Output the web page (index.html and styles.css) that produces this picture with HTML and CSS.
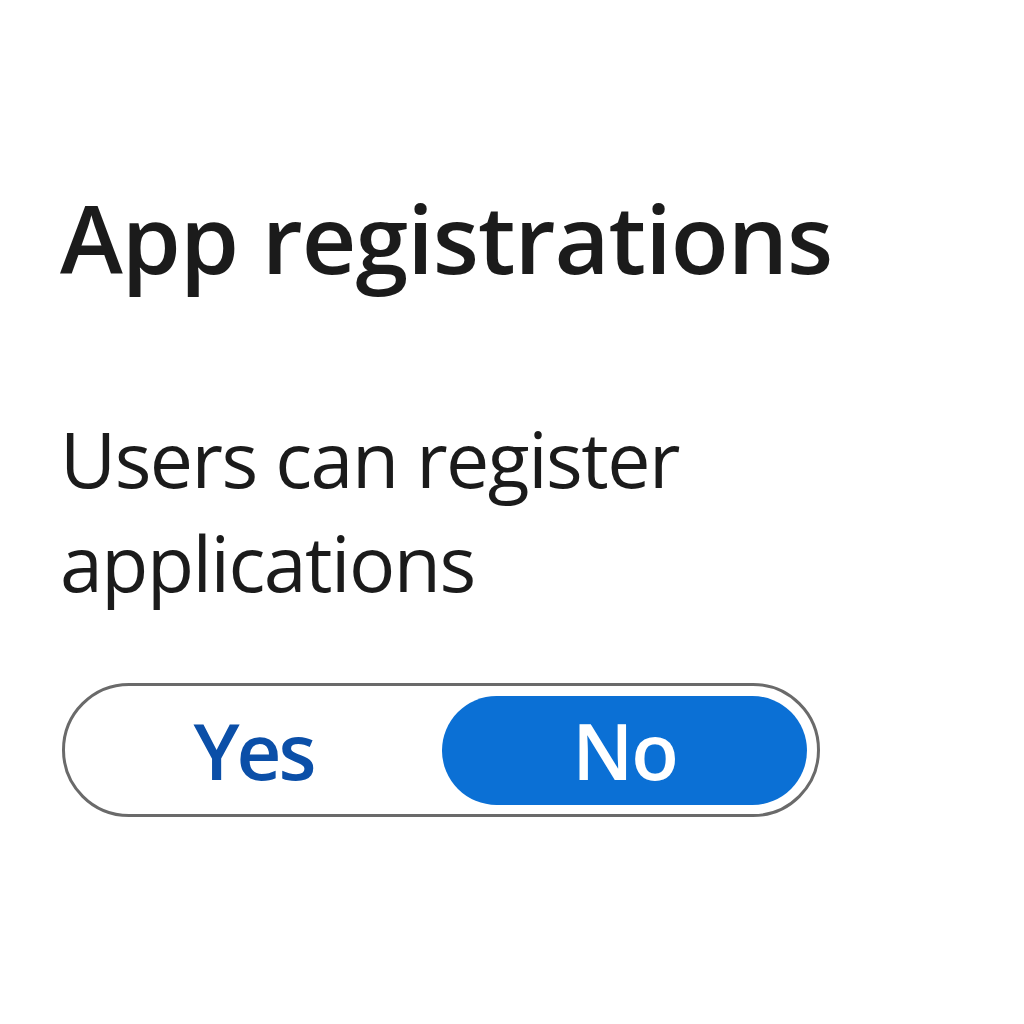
FILE: index.html
```html
<!DOCTYPE html>
<html>
<head>
<meta charset="utf-8">
<link rel="stylesheet" href="styles.css">
</head>
<body>
<main class="page">
  <h1 class="title">App registrations</h1>
  <p class="label">Users can register applications</p>
  <div class="toggle">
    <span class="opt yes">Yes</span>
    <span class="opt no">No</span>
  </div>
</main>
</body>
</html>
```
FILE: styles.css
```css
html, body {
  margin: 0;
  padding: 0;
  background: #ffffff;
}
.page {
  font-family: "Open Sans", "Noto Sans", sans-serif;
  color: #1b1b1b;
  padding: 177px 0 0 60px;
}
.title {
  margin: 0;
  font-size: 95px;
  font-weight: 600;
  line-height: 120px;
  letter-spacing: -1px;
}
.label {
  margin: 110px 0 0 0;
  width: 700px;
  font-size: 77px;
  font-weight: 400;
  line-height: 104px;
  letter-spacing: -1.5px;
}
.toggle {
  margin-top: 68px;
  margin-left: 2px;
  width: 742px;
  height: 128px;
  border: 3px solid #6a6a6a;
  border-radius: 70px;
  display: flex;
  align-items: center;
  padding: 0 10px 0 0;
  box-sizing: content-box;
}
.opt {
  flex: 1;
  height: 109px;
  display: flex;
  align-items: center;
  justify-content: center;
  font-size: 78px;
  font-weight: 600;
  border-radius: 55px;
}
.yes {
  color: #0b4fa8;
  letter-spacing: -3px;
}
.no {
  flex: 0 0 365px;
  background: #0b70d5;
  color: #ffffff;
  letter-spacing: -2px;
}
```
